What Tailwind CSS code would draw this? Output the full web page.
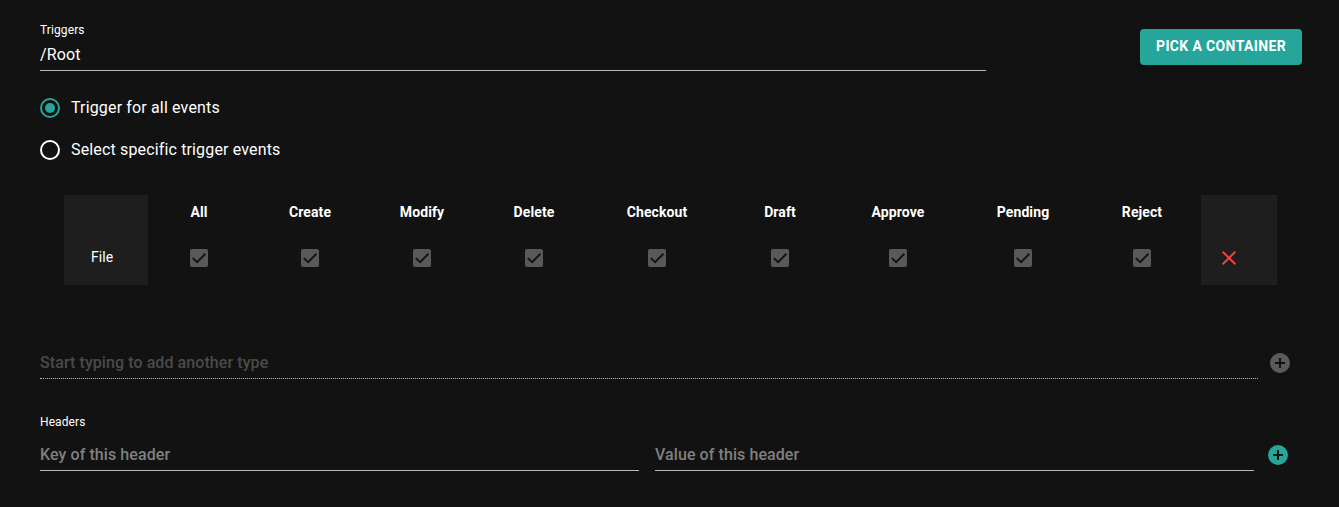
<!DOCTYPE html>
<html lang="en">
<head>
<meta charset="utf-8">
<title>Triggers</title>
<script src="https://cdn.jsdelivr.net/npm/@tailwindcss/browser@4"></script>
</head>
<body class="bg-[#121212] text-white font-['Roboto',sans-serif] tracking-[0.15px] h-[507px] overflow-hidden">
<svg class="hidden">
  <symbol id="check" viewBox="0 0 18 18"><rect width="18" height="18" rx="2" fill="#595959"/><path d="M2.8 9.1 7.1 13.2 15.4 4.8" fill="none" stroke="#121212" stroke-width="2"/></symbol>
  <symbol id="plus" viewBox="2 2 20 20"><path fill="currentColor" d="M17 13h-4v4h-2v-4H7v-2h4V7h2v4h4m-5-9A10 10 0 0 0 2 12a10 10 0 0 0 10 10 10 10 0 0 0 10-10A10 10 0 0 0 12 2z"/></symbol>
</svg>
<main class="pl-10 pt-[22px]">
  <div class="flex justify-between pr-[37px]">
    <div class="w-[946px] h-[49px] border-b border-[#b8b8b8]">
      <div class="text-xs leading-4 tracking-[0.1px]">Triggers</div>
      <div class="text-base leading-[34px]">/Root</div>
    </div>
    <button class="mt-[7px] h-9 w-[162px] pb-0.5 rounded bg-[#26a69a] text-sm font-bold tracking-[0.36px] whitespace-nowrap shadow-md">PICK A CONTAINER</button>
  </div>
  <div class="mt-[27px] flex flex-col gap-[22px]">
    <label class="flex items-center gap-[11px] h-5"><span class="size-5 rounded-full border-2 border-[#26a69a] flex items-center justify-center"><span class="size-2.5 rounded-full bg-[#26a69a]"></span></span><span>Trigger for all events</span></label>
    <label class="flex items-center gap-[11px] h-5"><span class="size-5 rounded-full border-2 border-white"></span><span>Select specific trigger events</span></label>
  </div>
  <div id="events" class="ml-6 mt-[35px] h-[90px] grid grid-cols-[84px_109px_106px_118px_106px_140px_106px_130px_120px_118px_76px] text-sm tracking-[0.1px]">
    <div class="bg-[#1e1e1e] pt-[52px] pl-[27px] leading-5">File</div>
  </div>
  <div class="mt-[60px] flex h-[34px]">
    <div class="w-[1218px] border-b border-dotted border-[#b8b8b8] text-[#4a4a4a] font-medium tracking-[0.08px] leading-[35px]">Start typing to add another type</div>
    <svg class="size-5 mt-2 ml-3 text-[#5a5a5a]"><use href="#plus"/></svg>
  </div>
  <div class="mt-[35px] text-xs leading-4 tracking-[0.1px]">Headers</div>
  <div class="mt-[8px] flex h-[33px] text-[#808080] font-medium tracking-[0.08px]">
    <div class="w-[599px] border-b border-[#b8b8b8] leading-[34px]">Key of this header</div>
    <div class="ml-4 w-[599px] border-b border-[#b8b8b8] leading-[34px]">Value of this header</div>
    <svg class="size-5 mt-[7px] ml-3.5 text-[#26a69a]"><use href="#plus"/></svg>
  </div>
</main>
<template id="event-cell">
  <div class="flex flex-col items-center"><span class="font-bold leading-5 mt-[7px]"></span><svg class="size-[18px] mt-[27px]"><use href="#check"/></svg></div>
</template>
<script>
const grid = document.getElementById('events');
['All','Create','Modify','Delete','Checkout','Draft','Approve','Pending','Reject'].forEach(name => {
  const cell = document.getElementById('event-cell').content.cloneNode(true);
  cell.querySelector('span').textContent = name;
  if (name === 'All') cell.firstElementChild.classList.add('pr-[7px]');
  grid.append(cell);
});
grid.insertAdjacentHTML('beforeend', '<div class="bg-[#1e1e1e] pt-14 pl-[21px]"><svg class="size-3.5 text-[#f44336]" viewBox="0 0 14 14"><path d="M.7.7 13.3 13.3M13.3.7.7 13.3" stroke="currentColor" stroke-width="2"/></svg></div>');
</script>
</body>
</html>
